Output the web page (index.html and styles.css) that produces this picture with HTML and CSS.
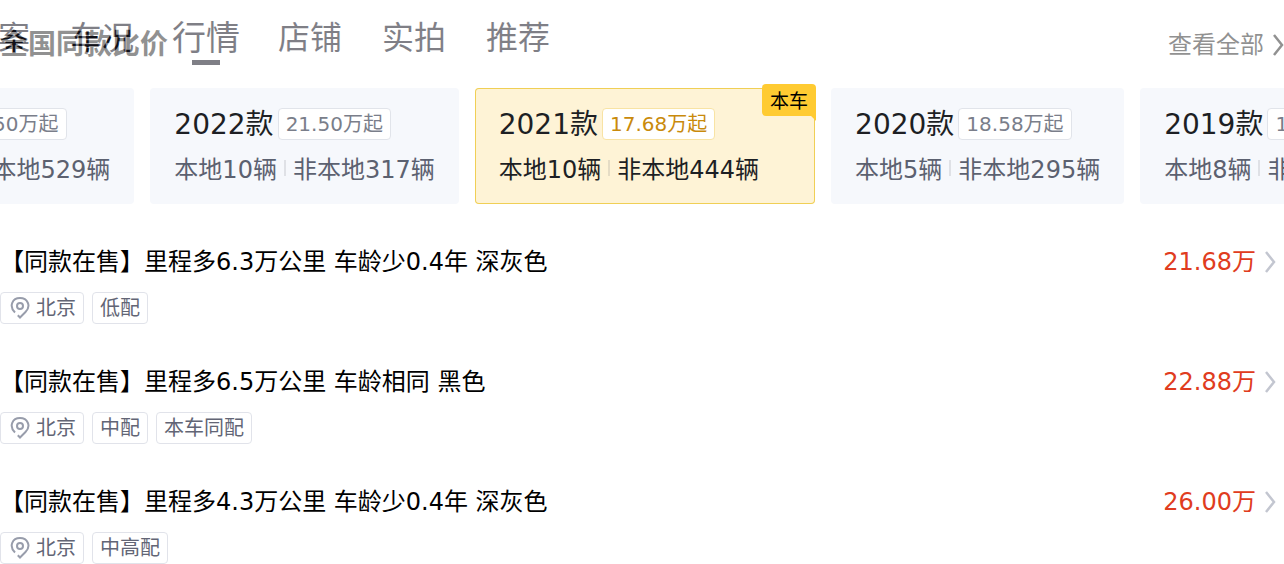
FILE: index.html
```html
<!DOCTYPE html>
<html lang="zh-CN">
<head>
    <meta charset="UTF-8">
    <meta name="viewport" content="width=device-width, initial-scale=1.0">
    <title>全国同款比价</title>
    <link rel="stylesheet" href="styles.css">
</head>
<body>
    <nav class="tabs">
        <a class="tab" href="#archive">档案</a>
        <a class="tab" href="#condition">车况</a>
        <a class="tab active" href="#market">行情</a>
        <a class="tab" href="#shop">店铺</a>
        <a class="tab" href="#photos">实拍</a>
        <a class="tab" href="#recommend">推荐</a>
    </nav>

    <main id="market">
        <div class="header">
            <h2>全国同款比价</h2>
            <a class="more" href="#all">查看全部
                <svg class="arrow" viewBox="0 0 12 24"><path d="M2 2l8 10-8 10"/></svg>
            </a>
        </div>

        <div class="years">
            <button class="year">
                <span class="year-top"><span class="year-name">2023款</span><span class="year-price">22.50万起</span></span>
                <span class="year-count"><span>本地10辆</span><i></i><span>非本地529辆</span></span>
            </button>
            <button class="year">
                <span class="year-top"><span class="year-name">2022款</span><span class="year-price">21.50万起</span></span>
                <span class="year-count"><span>本地10辆</span><i></i><span>非本地317辆</span></span>
            </button>
            <button class="year current">
                <span class="year-top"><span class="year-name">2021款</span><span class="year-price">17.68万起</span></span>
                <span class="year-count"><span>本地10辆</span><i></i><span>非本地444辆</span></span>
                <span class="badge">本车</span>
            </button>
            <button class="year">
                <span class="year-top"><span class="year-name">2020款</span><span class="year-price">18.58万起</span></span>
                <span class="year-count"><span>本地5辆</span><i></i><span>非本地295辆</span></span>
            </button>
            <button class="year">
                <span class="year-top"><span class="year-name">2019款</span><span class="year-price">16.80万起</span></span>
                <span class="year-count"><span>本地8辆</span><i></i><span>非本地206辆</span></span>
            </button>
        </div>

        <div class="cars">
            <a class="car" href="#car1">
                <span class="car-top">
                    <span class="car-title">【同款在售】里程多6.3万公里 车龄少0.4年 深灰色</span>
                    <span class="car-price">21.68万</span>
                    <svg class="arrow" viewBox="0 0 12 24"><path d="M2 2l8 10-8 10"/></svg>
                </span>
                <span class="tags">
                    <span class="tag"><svg class="pin" viewBox="0 0 20 22"><path d="M5 15.500C-1.500 9 2.500 1 10 1S21.500 9 15.500 15L10 20.500 7.800 18.200"/><circle cx="10" cy="9" r="3"/></svg>北京</span>
                    <span class="tag">低配</span>
                </span>
            </a>
            <a class="car" href="#car2">
                <span class="car-top">
                    <span class="car-title">【同款在售】里程多6.5万公里 车龄相同 黑色</span>
                    <span class="car-price">22.88万</span>
                    <svg class="arrow" viewBox="0 0 12 24"><path d="M2 2l8 10-8 10"/></svg>
                </span>
                <span class="tags">
                    <span class="tag"><svg class="pin" viewBox="0 0 20 22"><path d="M5 15.500C-1.500 9 2.500 1 10 1S21.500 9 15.500 15L10 20.500 7.800 18.200"/><circle cx="10" cy="9" r="3"/></svg>北京</span>
                    <span class="tag">中配</span>
                    <span class="tag">本车同配</span>
                </span>
            </a>
            <a class="car" href="#car3">
                <span class="car-top">
                    <span class="car-title">【同款在售】里程多4.3万公里 车龄少0.4年 深灰色</span>
                    <span class="car-price">26.00万</span>
                    <svg class="arrow" viewBox="0 0 12 24"><path d="M2 2l8 10-8 10"/></svg>
                </span>
                <span class="tags">
                    <span class="tag"><svg class="pin" viewBox="0 0 20 22"><path d="M5 15.500C-1.500 9 2.500 1 10 1S21.500 9 15.500 15L10 20.500 7.800 18.200"/><circle cx="10" cy="9" r="3"/></svg>北京</span>
                    <span class="tag">中高配</span>
                </span>
            </a>
        </div>
    </main>
</body>
</html>
```
FILE: styles.css
```css
* {
    box-sizing: border-box;
}
body {
    margin: 0;
    font-family: "DejaVu Sans", "Noto Sans CJK SC", sans-serif;
    background-color: #ffffff;
    color: #000000;
}
main {
    overflow-x: clip;
}
a {
    color: inherit;
    text-decoration: none;
}
svg {
    fill: none;
    stroke: currentColor;
    stroke-width: 2;
    flex-shrink: 0;
}

.tabs {
    position: absolute;
    top: 0;
    left: 0;
    right: 0;
    z-index: 2;
    display: flex;
    height: 80px;
    padding-top: 16px;
    background-color: #ffffff;
    opacity: 0.5;
    overflow: hidden;
}
.tab {
    display: flex;
    flex-direction: column;
    align-items: center;
    flex: 0 0 104px;
    font-size: 32px;
    line-height: 44px;
    color: #020210;
}
.tab:first-child {
    margin-left: -54px;
}
.tab.active {
    font-size: 34px;
}
.tab.active::after {
    content: "";
    width: 28px;
    height: 5px;
    background-color: #020210;
}

.header {
    display: flex;
    justify-content: space-between;
    align-items: center;
    height: 88px;
    padding-top: 2px;
}
.header h2 {
    margin: 0;
    font-size: 28px;
    line-height: 40px;
    color: #222222;
}
.more {
    display: flex;
    align-items: center;
    gap: 8px;
    font-size: 24px;
    line-height: 36px;
    color: #222222;
}
.arrow {
    width: 12px;
    height: 24px;
    stroke-width: 2.5;
}

.years {
    display: flex;
    gap: 16px;
    margin-left: -174px;
}
.year {
    position: relative;
    flex: none;
    height: 116px;
    padding: 20px 24px;
    border: none;
    border-radius: 4px;
    background-color: #f6f8fc;
    font-family: inherit;
    text-align: left;
    color: #5c6170;
    cursor: pointer;
}
.year-top {
    display: flex;
    align-items: center;
    gap: 4px;
    height: 32px;
}
.year-name {
    font-size: 28px;
    line-height: 32px;
    padding-top: 2px;
    color: #1d1f24;
}
.year-price {
    padding: 0 7px;
    border: 1px solid #e1e4ea;
    border-radius: 4px;
    background-color: #ffffff;
    font-size: 20px;
    line-height: 30px;
    color: #7a7e8a;
}
.year-count {
    display: flex;
    align-items: center;
    gap: 7px;
    margin-top: 12px;
    font-size: 24px;
    line-height: 36px;
}
.year-count i {
    width: 2px;
    height: 16px;
    margin-bottom: 4px;
    background-color: #dfe1e6;
}
.year.current {
    padding-right: 56px;
    background-color: #fef3d6;
    box-shadow: inset 0 0 0 1px #f0cf55;
    color: #1d1f24;
}
.current .year-price {
    border-color: #f8e3a4;
    color: #c98a0c;
}
.current .year-count i {
    background-color: #e5dcc5;
}
.badge {
    position: absolute;
    top: -4px;
    right: -1px;
    padding: 2px 8px 0;
    border-radius: 4px 4px 0 4px;
    background-color: #ffcb32;
    font-size: 19px;
    line-height: 30px;
    color: #000000;
}
.badge::after {
    content: "";
    position: absolute;
    top: 32px;
    right: 0;
    width: 5px;
    height: 5px;
    background-color: #ffcb32;
    clip-path: polygon(0 0, 100% 0, 100% 100%);
}

.cars {
    display: flex;
    flex-direction: column;
    gap: 40px;
    padding-top: 40px;
}
.car-top {
    display: flex;
    align-items: center;
    height: 36px;
    padding-right: 8px;
    font-size: 24px;
    line-height: 36px;
}
.car-title {
    flex: 1;
}
.car-price {
    margin-right: 8px;
    color: #e03c20;
}
.car .arrow {
    color: #c3c6d0;
}
.tags {
    display: flex;
    gap: 8px;
    margin-top: 12px;
}
.tag {
    display: flex;
    align-items: center;
    padding: 0 7px;
    border: 1px solid #e1e3ea;
    border-radius: 4px;
    font-size: 20px;
    line-height: 30px;
    color: #626575;
}
.pin {
    width: 20px;
    height: 22px;
    margin: 0 6px 0 2px;
    color: #989dab;
}
```
